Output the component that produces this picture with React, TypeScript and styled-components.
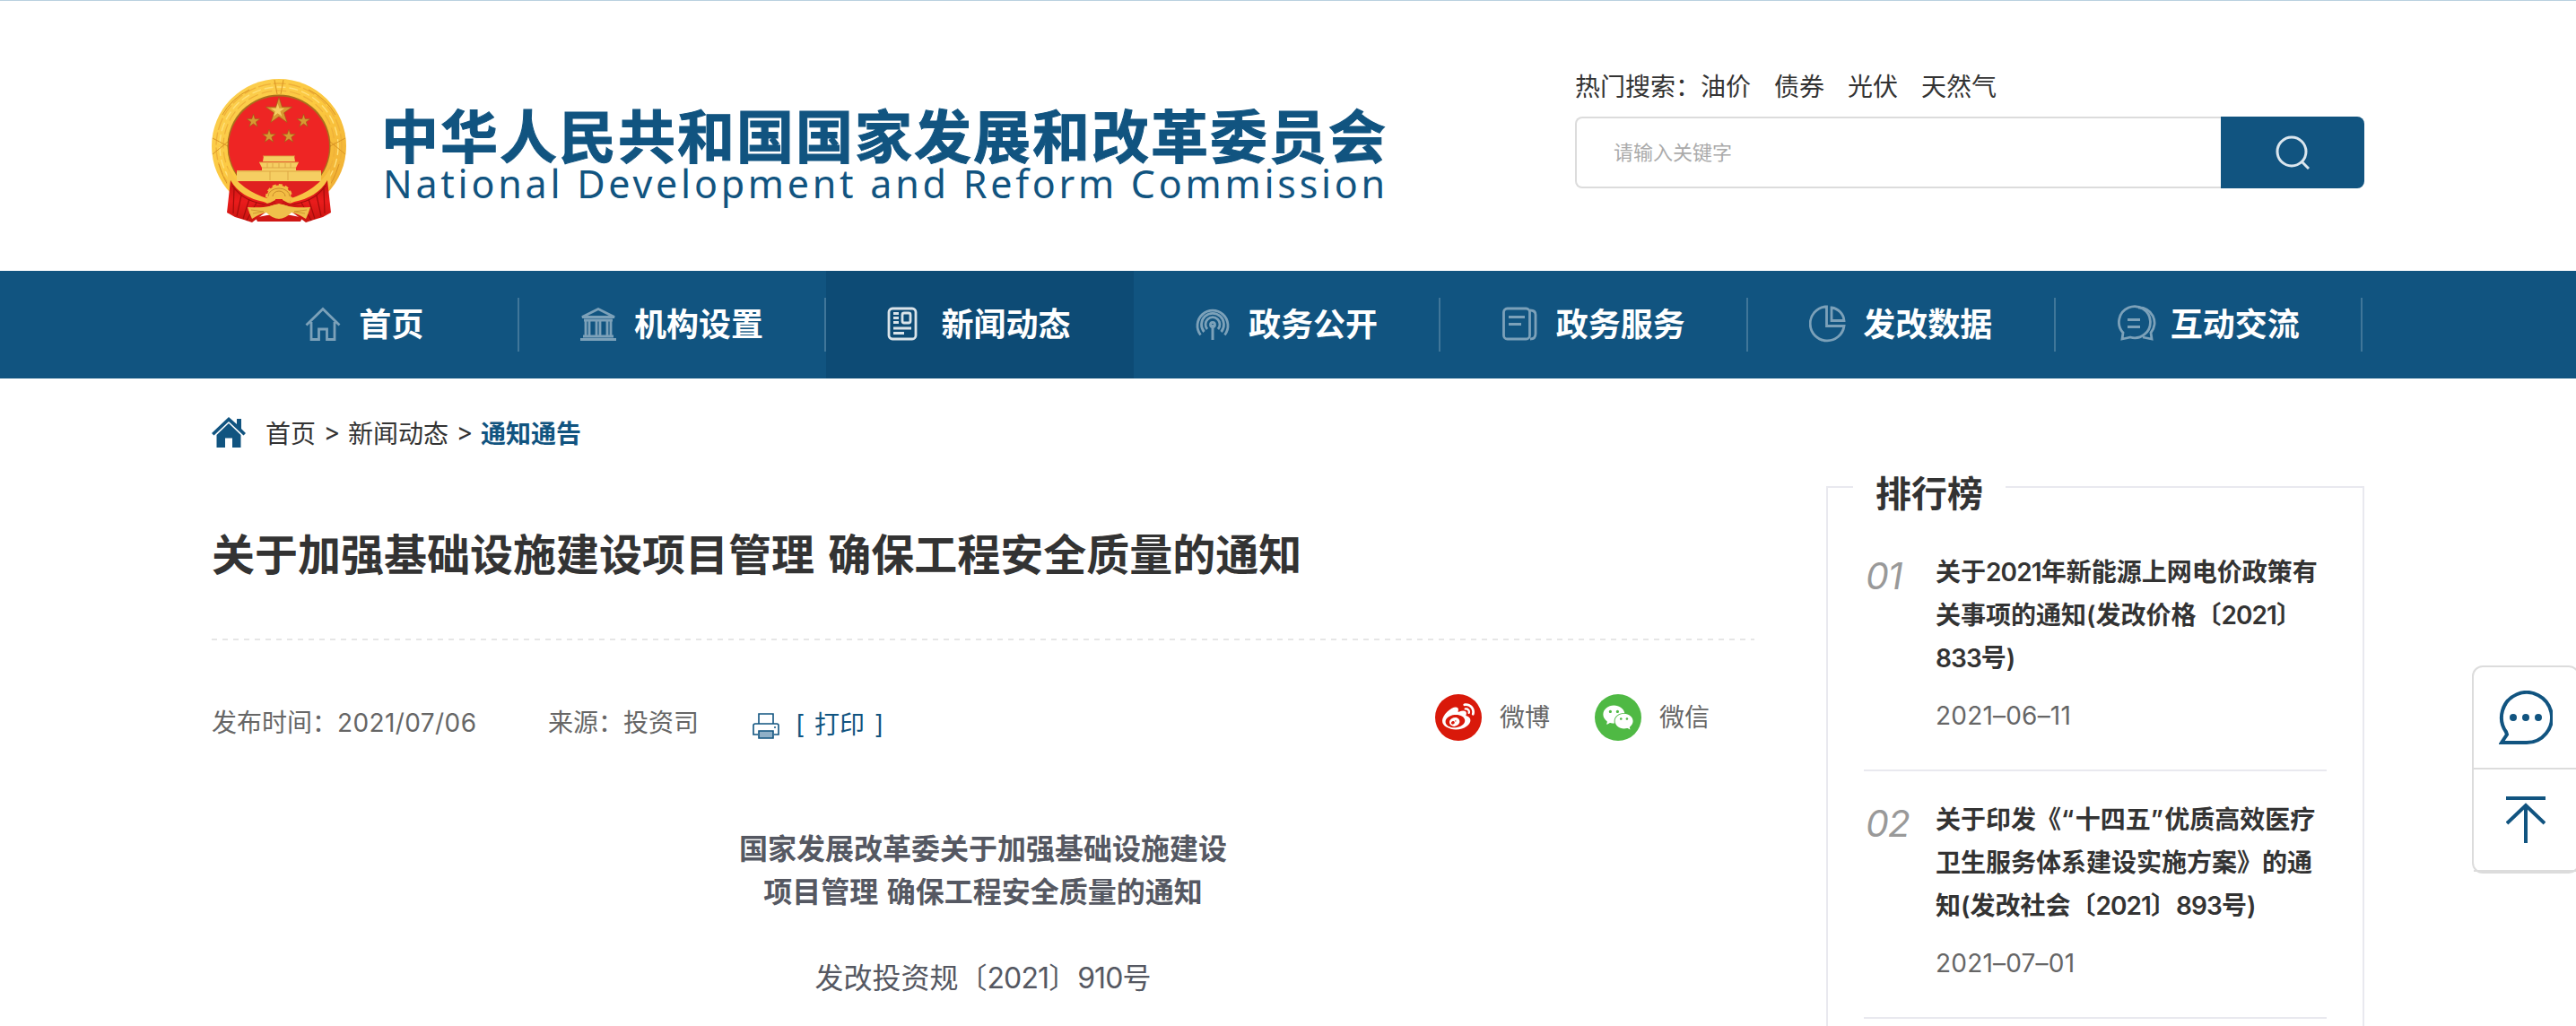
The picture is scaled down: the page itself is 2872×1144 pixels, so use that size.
import { FC, ReactNode } from 'react'
import { AiFillWechat } from 'react-icons/ai'
import { FaWeibo } from 'react-icons/fa'
import styled, { createGlobalStyle } from 'styled-components'

const theme = {
  blue: '#115480',
  blueDark: '#0d4b75',
  text: '#333333',
  grey: '#666666',
  line: '#e9e9ef',
  border: '#dcdcdc',
}

const GlobalStyle = createGlobalStyle`
  * {
    box-sizing: border-box;
  }
  body {
    margin: 0;
    background: #fff;
    color: ${theme.text};
    font-family: Inter, 'Noto Sans CJK SC', sans-serif;
    font-size: 28px;
  }
`

const Page = styled.div`
  position: relative;
  height: 1144px;
  overflow: hidden;
  border-top: 1px solid #b9d0df;
`

const Container = styled.div`
  display: flex;
  width: 2400px;
  margin: 0 auto;
`

const Header = styled(Container)`
  height: 301px;
  justify-content: space-between;
`

const Brand = styled.div`
  display: flex;
  padding-top: 87px;
`

const BrandText = styled.div`
  margin: 24px 0 0 39px;
  color: ${theme.blue};
  white-space: nowrap;
`

const BrandName = styled.div`
  height: 72px;
  line-height: 72px;
  font-family: 'Noto Sans CJK SC', sans-serif;
  font-size: 64px;
  font-weight: 700;
  letter-spacing: 2px;
  -webkit-text-stroke: 1px ${theme.blue};
`

const BrandEnglish = styled.div`
  padding-left: 2px;
  line-height: 42px;
  font-family: 'Noto Sans', sans-serif;
  font-size: 43px;
  letter-spacing: 3.75px;
`

const Search = styled.div`
  width: 880px;
  padding-top: 76px;
`

const HotWords = styled.div`
  display: flex;
  gap: 26px;
  height: 53px;
  line-height: 40px;
  span:first-child {
    margin-right: -26px;
  }
`

const SearchBar = styled.div`
  display: flex;
  height: 80px;
`

const SearchInput = styled.div`
  flex: 1;
  padding-left: 41px;
  border: 2px solid ${theme.border};
  border-right: 0;
  border-radius: 8px 0 0 8px;
  color: #aaa;
  font-size: 22px;
  line-height: 76px;
`

const SearchButton = styled.button`
  display: flex;
  align-items: center;
  justify-content: center;
  width: 160px;
  padding: 0;
  border: 0;
  border-radius: 0 8px 8px 0;
  background: ${theme.blue};
`

const NavBar = styled.nav`
  height: 120px;
  background: ${theme.blue};
`

const NavItem = styled.a<{ $active?: boolean }>`
  display: flex;
  width: 342.6px;
  align-items: center;
  height: 120px;
  background: ${({ $active }) => ($active ? theme.blueDark : 'transparent')};
  color: #fff;
  font-size: 36px;
  font-weight: 700;
  &::after {
    content: '';
    width: 2px;
    height: 60px;
    background: ${({ $active }) =>
      $active ? 'transparent' : 'rgba(255, 255, 255, 0.2)'};
  }
`

const NavLabel = styled.span`
  display: flex;
  flex: 1;
  align-items: center;
  justify-content: center;
  line-height: 116px;
  height: 120px;
`

const NavIcon = styled.svg<{ $active?: boolean }>`
  width: 44px;
  height: 44px;
  margin: -2px 16px 0 0;
  fill: none;
  stroke: #fff;
  stroke-width: 2.8;
  opacity: ${({ $active }) => ($active ? 0.85 : 0.45)};
`

const Main = styled(Container)`
  justify-content: space-between;
  align-items: flex-start;
`

const Article = styled.main`
  width: 1720px;
`

const Breadcrumb = styled.div`
  display: flex;
  align-items: center;
  height: 120px;
  svg {
    margin-right: 22px;
  }
  b {
    color: ${theme.blue};
  }
`

const Separator = styled.span`
  width: 36px;
  text-align: center;
`

const Title = styled.h1`
  height: 170px;
  margin: 0;
  padding-top: 41px;
  font-size: 48px;
  font-weight: 700;
  line-height: 72px;
  word-spacing: 4px;
`

const DashedLine = styled.div`
  height: 2px;
  background: repeating-linear-gradient(
    to right,
    #e6e6e6 0 6px,
    transparent 6px 12px
  );
`

const Meta = styled.div`
  display: flex;
  height: 186px;
  padding-top: 72px;
  color: ${theme.grey};
  line-height: 40px;
`

const MetaItem = styled.span<{ $width: number }>`
  width: ${({ $width }) => $width}px;
  white-space: nowrap;
`

const Spaced = styled.span<{ $spacing: number }>`
  letter-spacing: ${({ $spacing }) => $spacing}px;
`

const Print = styled.a`
  display: flex;
  padding: 2px 0 0 0;
  margin-right: auto;
  color: ${theme.blue};
  word-spacing: 3px;
  svg {
    margin: 7px 18px 0 0;
  }
`

const Share = styled.a`
  display: flex;
  align-items: center;
  width: 178px;
  height: 52px;
  margin-top: -12px;
`

const ShareIcon = styled.span<{ $color: string }>`
  display: flex;
  align-items: center;
  justify-content: center;
  width: 52px;
  height: 52px;
  margin-right: 20px;
  border-radius: 50%;
  background: ${({ $color }) => $color};
  color: #fff;
`

const Content = styled.div`
  padding-top: 23px;
  color: #555862;
  font-size: 32px;
  line-height: 48px;
  text-align: center;
  word-spacing: 2px;
  p {
    margin: 0 0 48px;
  }
`

const Ranking = styled.aside`
  width: 600px;
  height: 760px;
  margin-top: 120px;
  padding: 0 40px;
  border: 2px solid ${theme.line};
`

const RankingTitle = styled.h2`
  width: 170px;
  height: 60px;
  margin: -22px 0 0 -12px;
  background: #fff;
  font-size: 40px;
  line-height: 58px;
  text-align: center;
`

const RankingItem = styled.div`
  display: flex;
  width: 516px;
  height: 276px;
  padding-top: 30px;
  border-bottom: 2px solid ${theme.line};
  &:first-of-type {
    margin-top: 2px;
  }
`

const RankingNumber = styled.span`
  width: 80px;
  padding-left: 2px;
  color: #999;
  font-size: 41px;
  font-style: italic;
  line-height: 56px;
  letter-spacing: -1px;
`

const RankingLink = styled.div`
  font-weight: 600;
  line-height: 48px;
  white-space: nowrap;
`

const RankingDate = styled.div`
  margin-top: 16px;
  color: ${theme.grey};
  line-height: 48px;
  letter-spacing: 0.2px;
`

const Floating = styled.div`
  position: absolute;
  top: 741px;
  left: 2756px;
  width: 120px;
  border: 2px solid ${theme.border};
  border-radius: 12px;
  background: #fff;
`

const FloatingButton = styled.a`
  display: flex;
  align-items: center;
  justify-content: center;
  height: 114px;
  border-bottom: 2px solid ${theme.border};
`

const star = (cx: number, cy: number, r: number) =>
  Array.from({ length: 10 }, (_, i) => {
    const radius = i % 2 ? r * 0.38 : r
    const angle = (Math.PI * i) / 5 - Math.PI / 2
    return `${cx + radius * Math.cos(angle)},${cy + radius * Math.sin(angle)}`
  }).join(' ')

const Emblem: FC = () => (
  <svg width="150" height="160" viewBox="0 0 150 160">
    <defs>
      <linearGradient id="gold" x1="0" y1="0" x2="1" y2="1">
        <stop offset="0" stopColor="#fbd052" />
        <stop offset="0.5" stopColor="#fcc83f" />
        <stop offset="1" stopColor="#eda831" />
      </linearGradient>
      <linearGradient id="drape" x1="0" y1="0" x2="0" y2="1">
        <stop offset="0" stopColor="#c4120f" />
        <stop offset="0.5" stopColor="#ea1c1c" />
        <stop offset="1" stopColor="#c8140f" />
      </linearGradient>
    </defs>
    <circle cx="75" cy="75" r="75" fill="url(#gold)" />
    <g fill="none">
      <circle
        cx="75"
        cy="75"
        r="70"
        stroke="#efb03a"
        strokeWidth="1.4"
        strokeDasharray="14 3"
      />
      <circle
        cx="75"
        cy="75"
        r="66"
        stroke="#ffe07a"
        strokeWidth="1.4"
        strokeDasharray="10 4"
      />
      <circle
        cx="75"
        cy="75"
        r="62"
        stroke="#efb03a"
        strokeWidth="1.2"
        strokeDasharray="12 4"
      />
    </g>
    <g fill="none" stroke="#d99425" strokeWidth="1">
      <path d="M1 66l17 9M1 84l17-14M149 66l-17 9M149 84l-17-14M70 1l3 16M80 1l-3 16" />
      <path d="M12 40q10-18 30-28M138 40q-10-18-30-28M8 95q6 20 14 28M142 95q-6 20-14 28" />
    </g>
    <circle cx="75" cy="75" r="57.5" fill="#a8701c" />
    <circle cx="75" cy="75.5" r="56" fill="#ee2524" />
    <g fill="#d79a32" stroke="#9a5c16" strokeWidth="0.6">
      <polygon points={star(75, 36, 15.5)} />
      <polygon points={star(46.5, 47, 7.8)} />
      <polygon points={star(102.5, 47, 7.8)} />
      <polygon points={star(64, 64, 7.8)} />
      <polygon points={star(86, 64, 7.8)} />
    </g>
    <g fill="#f5ce62">
      <polygon points={star(73.6, 35.2, 8)} />
      <path d="M58 86l-1 6h36l-1-6z" />
      <path d="M53 93h44l-3 6H56z" />
      <path d="M56 99h38v5H56z" />
      <path d="M28 102h94v12H28z" />
    </g>
    <path
      d="M53 93h44M57 86h36M56 99h38M28 103h94M62 94v5M68 94v5M75 94v5M82 94v5M88 94v5M65 103v10M85 103v10"
      stroke="#dba443"
      strokeWidth="0.9"
    />
    <path d="M28 114h94v6q-18 18-47 18t-47-18z" fill="#e02020" />
    <path
      d="M18 100Q32 124 64 134L58 142Q26 132 17 118zM132 100Q118 124 86 134L92 142Q124 132 133 118z"
      fill="#f8c445"
    />
    <path
      d="M21 113Q32 132 58 137L70 142Q58 150 45 160L36 157 26 154 17 149zM129 113Q118 132 92 137L80 142Q92 150 105 160L114 157 124 154 133 149z"
      fill="url(#drape)"
    />
    <path
      d="M25 122l-1 28M33 130l-5 23M42 134l-7 22M50 138l-11 20M125 122l1 28M117 130l5 23M108 134l7 22M100 138l11 20M23 119q14 20 42 21M127 119q-14 20-42 21"
      fill="none"
      stroke="#a30d0b"
      strokeWidth="1.2"
    />
    <path d="M49 155q26-8 52 0l-2 4H51z" fill="#cf1714" />
    <circle
      cx="75"
      cy="132"
      r="13.5"
      fill="#f3bd44"
      stroke="#f3bd44"
      strokeWidth="3"
      strokeDasharray="4 3"
    />
    <path
      d="M63 131a12 9 0 0 1 24 0M68 131a7 6 0 0 1 14 0"
      fill="none"
      stroke="#c98c2a"
      strokeWidth="1"
    />
    <path
      d="M44 141q18 0 27-6h8q9 6 27 6-16 4-27-1h-8q-11 5-27 1z"
      fill="#c91513"
    />
    <path
      d="M40 143q16 1 24-1l11-3 11 3q8 2 24 1-2 7-5 13-9-6-16-7-7 7-14 7t-14-7q-7 1-16 7-3-6-5-13z"
      fill="#efc04b"
    />
    <path
      d="M44 146l14 2M46 150l12-2M106 146l-14 2M104 150l-12-2"
      stroke="#c98c2a"
      strokeWidth="0.8"
    />
    <path d="M71 134h8v5h-8z" fill="#d91a18" />
  </svg>
)

const NAV: { label: string; icon: ReactNode; active?: boolean }[] = [
  {
    label: '首页',
    icon: (
      <>
        <path d="M1.5 23.5L20 5.5l18.500 18M7 20v19.500h8.500V28h9v11.500H33V20" />
      </>
    ),
  },
  {
    label: '机构设置',
    icon: (
      <>
        <path d="M2 14.500L20 5.500l18 9zM0 39.500h40M3 36h34M4 18h32" />
        <path d="M6 18v18M10 18v18M18 18v18M22 18v18M30 18v18M34 18v18" />
      </>
    ),
  },
  {
    label: '新闻动态',
    active: true,
    icon: (
      <>
        <rect x="2" y="5" width="30" height="34" rx="4" />
        <rect x="17" y="10" width="9" height="11" rx="2" />
        <path d="M7 10.500h6M7 15.500h6M7 20.500h6M7 27h20M7 32.500h12" />
      </>
    ),
  },
  {
    label: '政务公开',
    icon: (
      <>
        <path d="M6.500 34.500a17 17 0 1 1 27 0M10.500 31a12.500 12.500 0 1 1 19 0M14 28a8 8 0 1 1 12 0" />
        <circle cx="20" cy="23" r="2.500" />
        <path d="M20 23v17" strokeWidth="3" />
      </>
    ),
  },
  {
    label: '政务服务',
    icon: (
      <>
        <rect x="1.500" y="5" width="29" height="34" rx="4" />
        <path d="M31 7q6 0 6 5v21q0 6-6 6M7 14.500h18M7 22.500h14" />
      </>
    ),
  },
  {
    label: '发改数据',
    icon: (
      <>
        <path d="M18 3a19 19 0 1 0 21 21.500H19.500V3z" />
        <path d="M25 4v14.500h14A16 16 0 0 0 25 4z" />
      </>
    ),
  },
  {
    label: '互动交流',
    icon: (
      <>
        <path d="M6 39l1-7a17.500 17.500 0 1 1 8 5q-4 1-9 2z" />
        <path d="M24 4a17 17 0 0 1 14 28l1 7-10-2M12 17.500h14M12 25.500h14" />
      </>
    ),
  },
]

const RANKING = [
  {
    lines: ['关于2021年新能源上网电价政策有', '关事项的通知(发改价格〔2021〕', '833号)'],
    date: '2021–06–11',
  },
  {
    lines: [
      '关于印发《“十四五”优质高效医疗',
      '卫生服务体系建设实施方案》的通',
      '知(发改社会〔2021〕893号)',
    ],
    date: '2021–07–01',
  },
]

// digits sit a little tighter than the ideographs, quotes a little wider
const renderLine = (line: string) =>
  line.split(/(\d+|[“”])/).map((part, index) => {
    if (index % 2 === 0) {
      return part
    }
    return (
      <Spaced key={index} $spacing={/\d/.test(part) ? -0.9 : 1.5}>
        {part}
      </Spaced>
    )
  })

const App: FC = () => {
  return (
    <>
      <GlobalStyle />
      <Page>
        <Header as="header">
          <Brand>
            <Emblem />
            <BrandText>
              <BrandName>中华人民共和国国家发展和改革委员会</BrandName>
              <BrandEnglish>
                National Development and Reform Commission
              </BrandEnglish>
            </BrandText>
          </Brand>
          <Search>
            <HotWords>
              <span>热门搜索：</span>
              <span>油价</span>
              <span>债券</span>
              <span>光伏</span>
              <span>天然气</span>
            </HotWords>
            <SearchBar>
              <SearchInput>请输入关键字</SearchInput>
              <SearchButton>
                <svg width="38" height="38" fill="none" stroke="#dbe6ee" strokeWidth="3">
                  <circle cx="18" cy="18" r="16" />
                  <path d="M29 29l8 8" />
                </svg>
              </SearchButton>
            </SearchBar>
          </Search>
        </Header>
        <NavBar>
          <Container>
            {NAV.map(({ label, icon, active }) => (
              <NavItem key={label} $active={active}>
                <NavLabel>
                  <NavIcon $active={active} viewBox="0 0 44 44">
                    {icon}
                  </NavIcon>
                  {label}
                </NavLabel>
              </NavItem>
            ))}
          </Container>
        </NavBar>
        <Main>
          <Article>
            <Breadcrumb>
              <svg width="38" height="34" viewBox="0 0 38 34" fill={theme.blue}>
                <path d="M19 0L0 18l2.500 2.500L19 5l16.500 15.500L38 18l-5-5V2h-5v6z" />
                <path d="M19 7L5.500 20v14H15V23.500h8V34h9.500V20z" />
              </svg>
              首页<Separator>&gt;</Separator>
              新闻动态<Separator>&gt;</Separator>
              <b>通知通告</b>
            </Breadcrumb>
            <Title>关于加强基础设施建设项目管理 确保工程安全质量的通知</Title>
            <DashedLine />
            <Meta>
              <MetaItem $width={375}>
                发布时间：<Spaced $spacing={0.4}>2021/07/06</Spaced>
              </MetaItem>
              <MetaItem $width={228}>来源：投资司</MetaItem>
              <Print>
                <svg
                  width="30"
                  height="30"
                  fill="none"
                  stroke={theme.blue}
                  strokeWidth="1.6"
                >
                  <path d="M7 12V1h16v11" />
                  <path d="M6 24H1V14q0-2 2-2h24q2 0 2 2v10h-5" />
                  <path d="M7 20h16v8H7z" fill="#8fb0c7" />
                  <path d="M24 16h2" />
                </svg>
                [ 打印 ]
              </Print>
              <Share>
                <ShareIcon $color="#d9190a">
                  <FaWeibo size={36} />
                </ShareIcon>
                微博
              </Share>
              <Share>
                <ShareIcon $color="#4fb944">
                  <AiFillWechat size={38} />
                </ShareIcon>
                微信
              </Share>
            </Meta>
            <Content>
              <p>
                <b>
                  国家发展改革委关于加强基础设施建设
                  <br />
                  项目管理 确保工程安全质量的通知
                </b>
              </p>
              <p>{renderLine('发改投资规〔2021〕910号')}</p>
            </Content>
          </Article>
          <Ranking>
            <RankingTitle>排行榜</RankingTitle>
            {RANKING.map(({ lines, date }, index) => (
              <RankingItem key={date}>
                <RankingNumber>0{index + 1}</RankingNumber>
                <div>
                  {lines.map((line) => (
                    <RankingLink key={line}>{renderLine(line)}</RankingLink>
                  ))}
                  <RankingDate>{date}</RankingDate>
                </div>
              </RankingItem>
            ))}
          </Ranking>
        </Main>
        <Floating>
          <FloatingButton>
            <svg width="60" height="60" fill="none" stroke={theme.blue} strokeWidth="4">
              <path d="M3 58h28a28 28 0 1 0-23-12l1 3z" />
              <g fill={theme.blue} stroke="none">
                <circle cx="16" cy="30" r="4" />
                <circle cx="30" cy="30" r="4" />
                <circle cx="44" cy="30" r="4" />
              </g>
            </svg>
          </FloatingButton>
          <FloatingButton>
            <svg width="44" height="52" fill="none" stroke={theme.blue} strokeWidth="4">
              <path d="M0 2h44M22 52V10M1 30l21-20 21 20" />
            </svg>
          </FloatingButton>
        </Floating>
      </Page>
    </>
  )
}

export default App
